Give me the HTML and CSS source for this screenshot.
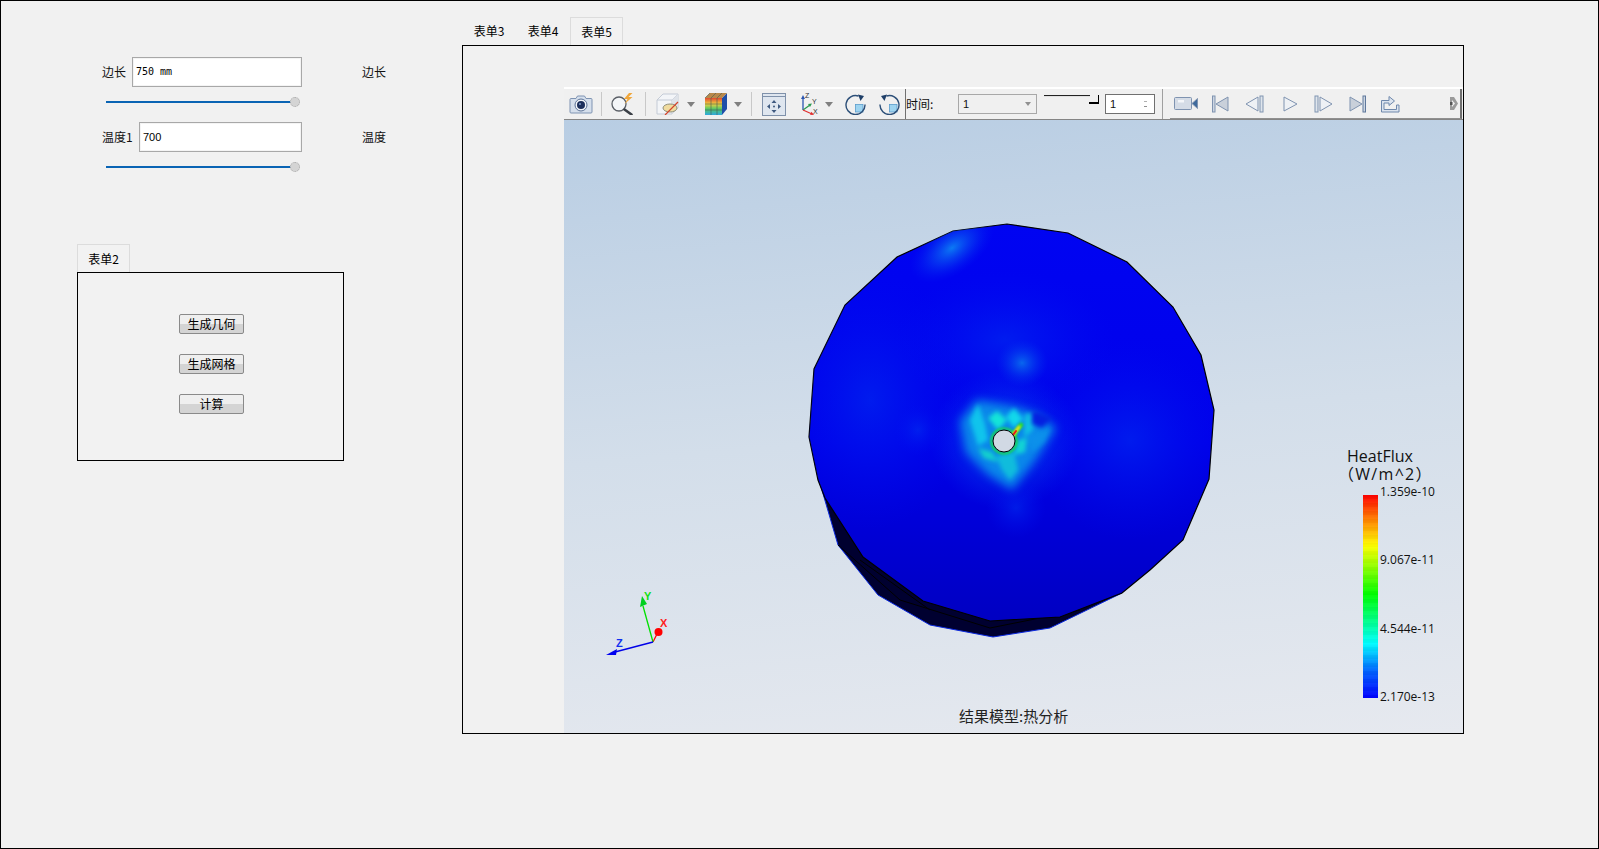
FILE: index.html
```html
<!DOCTYPE html>
<html lang="zh">
<head>
<meta charset="utf-8">
<title>热分析</title>
<link rel="stylesheet" href="styles.css">
</head>
<body>
<div class="window">
  <section class="left">
    <div class="field">
      <label class="lbl lbl-a">边长</label>
      <div class="input input-a mono">750 mm</div>
      <span class="hint">边长</span>
    </div>
    <div class="slider"><span class="track"></span><span class="thumb"></span></div>
    <div class="field field-2">
      <label class="lbl lbl-b">温度1</label>
      <div class="input input-b">700</div>
      <span class="hint">温度</span>
    </div>
    <div class="slider"><span class="track"></span><span class="thumb"></span></div>

    <div class="tabs tabs-left"><span class="tab active">表单2</span></div>
    <div class="panel-left">
      <button class="btn">生成几何</button>
      <button class="btn">生成网格</button>
      <button class="btn">计算</button>
    </div>
  </section>

  <section class="right">
    <div class="tabs"><span class="tab">表单3</span><span class="tab">表单4</span><span class="tab active">表单5</span></div>
    <div class="panel-right">
      <div class="toolbar">
        <svg class="ic ic-cam" viewBox="0 0 24 20"><path d="M2 4.500h5l1.500-2.500h7L17 4.500h5a1 1 0 0 1 1 1V18a1 1 0 0 1-1 1H2a1 1 0 0 1-1-1V5.500a1 1 0 0 1 1-1z" fill="#d5dfec" stroke="#7e93b2"/><circle cx="12" cy="11" r="6" fill="#f2f5f9" stroke="#5a7196"/><circle cx="12" cy="11" r="4" fill="#1c2f5c"/><circle cx="11" cy="10" r="1" fill="#7f9cc8"/></svg>
        <i class="sep sep-1"></i>
        <svg class="ic ic-mag" viewBox="0 0 24 22"><circle cx="8" cy="11" r="7" fill="#f4f6f8" stroke="#5a5f66" stroke-width="1.300"/><path d="M13.500 16.500l7 5" stroke="#3a3f46" stroke-width="2.600" stroke-linecap="round"/><path d="M18 0l-5 6h3.500l-3 5 8-7h-4l4-4z" fill="#f0a63a"/></svg>
        <i class="sep sep-2"></i>
        <svg class="ic ic-box" viewBox="0 0 24 22"><path d="M1 7l6-6h15v14l-6 6H1z" fill="#f3f5f8" stroke="#c4cbd6"/><path d="M1 7h15v14M16 7l6-6" fill="none" stroke="#c4cbd6"/><path d="M16 7l6-6v14l-6 6z" fill="#dfe3e9"/><ellipse cx="14" cy="15" rx="7" ry="4" fill="#f0dca0" stroke="#8f8f7a"/><path d="M9 22L22 9" stroke="#d4442c" stroke-width="1.200"/></svg>
        <i class="drop drop-1"></i>
        <svg class="ic ic-cube" viewBox="0 0 22 22"><defs><linearGradient id="cubeFace" x1="0" y1="0" x2="0" y2="1"><stop offset="0" stop-color="#e04830"/><stop offset=".35" stop-color="#f0d040"/><stop offset=".65" stop-color="#50c868"/><stop offset="1" stop-color="#30a8e0"/></linearGradient></defs><path d="M17 5l5-5v16l-5 6z" fill="#1f4fa8"/><path d="M0 5l5-5h17l-5 5z" fill="#b8884a"/><rect x="0" y="5" width="17" height="17" fill="url(#cubeFace)"/><path d="M6 5v17M12 5v17M0 11h17M0 17h17M5 0L0 5M11 0L6 5M17 0l-5 5" stroke="#4a5a50" stroke-width=".6"/></svg>
        <i class="drop drop-2"></i>
        <i class="sep sep-3"></i>
        <svg class="ic ic-fit" viewBox="0 0 24 23"><rect x=".5" y=".5" width="23" height="22" fill="#dfe6ef" stroke="#7f91aa"/><path d="M.5 3.500h23" stroke="#7f91aa"/><path d="M12 7l-2.500 3h5zM12 20l-2.500-3h5zM5 13.500l3-2.500v5zM19 13.500l-3-2.500v5z" fill="#3f5a80"/><circle cx="12" cy="13.500" r="1" fill="#3f5a80"/></svg>
        <svg class="ic ic-axes" viewBox="0 0 20 24"><path d="M4 18V6" stroke="#2a55b0" stroke-width="1.300"/><path d="M4 3L2 7h4z" fill="#2a55b0"/><path d="M4 18l7-5" stroke="#2a9a50" stroke-width="1.300"/><path d="M13 11.500l-4 .5 2 3z" fill="#2a9a50"/><path d="M4 18l9 4" stroke="#e03030" stroke-width="1.300"/><path d="M15 23l-4-.2 1.500-3z" fill="#e03030"/><text x="6" y="6" class="ax">Z</text><text x="13" y="12" class="ax">Y</text><text x="14" y="22" class="ax">X</text></svg>
        <i class="drop drop-3"></i>
        <svg class="ic ic-rot" viewBox="0 0 21 21"><rect x="10.500" y="10.500" width="7.500" height="7.500" fill="#9ed4f0" stroke="#5a9ccc" stroke-width=".8"/><path d="M13.500 2A9.500 9.500 0 1 0 20 10.500" fill="none" stroke="#2c4f78" stroke-width="1.400"/><path d="M13 .5l6 1.500-3.500 5z" fill="#1f3f68"/></svg>
        <svg class="ic ic-rot2" viewBox="0 0 21 21"><rect x="10.500" y="10.500" width="7.500" height="7.500" fill="#9ed4f0" stroke="#5a9ccc" stroke-width=".8"/><path d="M7.500 2A9.500 9.500 0 1 1 1 10.500" fill="none" stroke="#2c4f78" stroke-width="1.400"/><path d="M8 .5L2 2l3.500 5z" fill="#1f3f68"/></svg>
        <i class="vline"></i>
        <span class="time-lbl">时间:</span>
        <div class="combo"><span>1</span><i class="combo-arrow"></i></div>
        <div class="mini-slider"><i class="mini-line"></i><i class="mini-corner"></i></div>
        <div class="spin"><span>1</span><i class="spin-arrows"></i></div>
        <i class="sep sep-4"></i>
        <div class="media">
          <svg class="ic ic-rec" viewBox="0 0 24 15"><rect x=".5" y="1.500" width="17" height="12" rx="1" fill="#d5dce6" stroke="#7f93b0"/><rect x="4" y="4" width="6" height="2.500" fill="#f4f6f9"/><path d="M18 7.500l5.500-5v10z" fill="#3f6a9c" stroke="#7f93b0"/></svg>
          <svg class="ic ic-first" viewBox="0 0 17 18"><rect x=".5" y="1" width="2.500" height="16" fill="#cdd6e2" stroke="#7f93b0"/><path d="M16 2v14L4 9z" fill="#c9d0da" stroke="#7f93b0"/></svg>
          <svg class="ic ic-prev" viewBox="0 0 19 18"><path d="M13 2v14L1 9z" fill="#eef1f5" stroke="#7f93b0"/><rect x="15" y="1" width="3" height="16" fill="#dfe5ec" stroke="#7f93b0"/></svg>
          <svg class="ic ic-play" viewBox="0 0 15 18"><path d="M1 2v14l13-7z" fill="#eef1f5" stroke="#7f93b0"/></svg>
          <svg class="ic ic-next" viewBox="0 0 19 18"><rect x="1" y="1" width="3" height="16" fill="#dfe5ec" stroke="#7f93b0"/><path d="M6 2v14l12-7z" fill="#eef1f5" stroke="#7f93b0"/></svg>
          <svg class="ic ic-last" viewBox="0 0 17 18"><path d="M1 2v14l12-7z" fill="#c9d0da" stroke="#7f93b0"/><rect x="14" y="1" width="2.500" height="16" fill="#cdd6e2" stroke="#5f789c"/></svg>
          <svg class="ic ic-export" viewBox="0 0 20 19"><path d="M1.500 6.500H9V2.500l5.500 4.500L9 11.500V9H4v6.500h12.500V11H19v7H1.500z" fill="#dbe3ee" stroke="#6f88ac" stroke-linejoin="round"/></svg>
          <svg class="ic ic-grip" viewBox="0 0 8 15"><path d="M0 1h4l4 6.500-4 6.500H0z" fill="#9a9a9a"/><path d="M2 4l3 3.500-3 3.500z" fill="#f0f0f0"/><rect x="0" y="6" width="2.500" height="3" fill="#555"/></svg>
        </div>
      </div>

      <div class="view">
        <svg class="scene" viewBox="564 120 899 613" aria-hidden="true">
          <defs>
            <linearGradient id="discFill" x1="0" y1="0" x2="0" y2="1">
              <stop offset="0" stop-color="#0004f2"/>
              <stop offset=".55" stop-color="#0000ea"/>
              <stop offset="1" stop-color="#0000c2"/>
            </linearGradient>
            <radialGradient id="softBlue"><stop offset="0" stop-color="#0030f0" stop-opacity=".55"/><stop offset="1" stop-color="#0010f0" stop-opacity="0"/></radialGradient>
            <radialGradient id="topGlow"><stop offset="0" stop-color="#0c80f4" stop-opacity=".95"/><stop offset=".5" stop-color="#0850f0" stop-opacity=".5"/><stop offset="1" stop-color="#0020f0" stop-opacity="0"/></radialGradient>
            <radialGradient id="midGlow"><stop offset="0" stop-color="#0a70ee" stop-opacity=".9"/><stop offset="1" stop-color="#0030ee" stop-opacity="0"/></radialGradient>
            <clipPath id="discClip"><polygon points="953,231 1007,224 1068,233 1127,262 1173,307 1201,355 1214,410 1209,479 1183,540 1150,570 1122,593 1060,617 990,621 923,601 863,557 825,498 818,480 809,437 814,369 845,305 897,257"/></clipPath>
            <filter id="b6" x="-100%" y="-100%" width="300%" height="300%"><feGaussianBlur stdDeviation="5"/></filter>
            <filter id="b3" x="-50%" y="-50%" width="200%" height="200%"><feGaussianBlur stdDeviation="2.200"/></filter>
            <filter id="b1" x="-50%" y="-50%" width="200%" height="200%"><feGaussianBlur stdDeviation=".8"/></filter>
          </defs>

          <polygon points="819,480 838,545 878,595 930,625 993,637 1050,628 1122,593 1060,610 990,610 900,570" fill="#000030" stroke="#0a28e0" stroke-width="1"/>
          <path d="M838,545 L900,600 L990,628 L1080,610 M860,560 L930,610" fill="none" stroke="#000" stroke-width="1"/>
          <polygon points="953,231 1007,224 1068,233 1127,262 1173,307 1201,355 1214,410 1209,479 1183,540 1150,570 1122,593 1060,617 990,621 923,601 863,557 825,498 818,480 809,437 814,369 845,305 897,257" fill="url(#discFill)" stroke="#000" stroke-width="1.200"/>

          <g clip-path="url(#discClip)">
            <ellipse cx="870" cy="400" rx="100" ry="130" fill="url(#softBlue)"/>
            <ellipse cx="1130" cy="440" rx="100" ry="100" fill="url(#softBlue)"/>
            <ellipse cx="1005" cy="340" rx="110" ry="70" fill="url(#softBlue)"/>
            <ellipse cx="952" cy="248" rx="48" ry="26" transform="rotate(-35 952 248)" fill="url(#topGlow)"/>
            <ellipse cx="1022" cy="363" rx="26" ry="24" fill="url(#midGlow)"/>
            <ellipse cx="918" cy="430" rx="24" ry="26" fill="url(#softBlue)"/>
            <ellipse cx="1005" cy="440" rx="75" ry="70" fill="url(#midGlow)"/>
            <ellipse cx="1016" cy="508" rx="30" ry="30" fill="url(#softBlue)"/>
            <path d="M960,421 L977,400 L1014,407 L1037,414 L1056,428 L1032,464 L1012,490 L988,474 L966,452z" fill="#0a88ea" filter="url(#b6)"/>
            <g filter="url(#b3)">
              <path d="M970,420 L978,404 L985,424 L988,440 L978,446z" fill="#10c4ec"/>
              <polygon points="988,418 997,411 1007,420 998,430" fill="#14e4d8"/>
              <polygon points="1006,417 1014,408 1023,419 1014,428" fill="#12d8ea"/>
              <polygon points="1025,414 1035,413 1033,430 1024,438" fill="#10c0e4"/>
              <polygon points="1028,436 1050,428 1044,442 1032,452" fill="#0c90ea"/>
              <polygon points="996,456 1014,452 1018,470 1010,480 1002,470" fill="#10bcdc"/>
              <polygon points="978,448 992,452 998,462 984,458" fill="#14d0cc"/>
              <polygon points="1018,440 1027,438 1025,452 1014,455" fill="#12d4d4"/>
            </g>
            <polygon points="1032,410 1052,418 1042,428 1032,424" fill="#0420e0" filter="url(#b3)"/>
            <circle cx="1004" cy="441" r="12.500" fill="none" stroke="#18e040" stroke-width="2.200" filter="url(#b1)"/>
            <path d="M1012,437 L1017,430 L1021,425" fill="none" stroke="#28e030" stroke-width="4.500" stroke-linecap="round" filter="url(#b1)"/>
            <path d="M1012,436 L1016,431 L1019,427" fill="none" stroke="#f0e020" stroke-width="3" stroke-linecap="round" filter="url(#b1)"/>
            <path d="M1013,435 L1016,431" fill="none" stroke="#e81818" stroke-width="2" stroke-linecap="round"/>
          </g>
          <circle cx="1004" cy="441" r="11" fill="#d1d9e4" stroke="#000" stroke-width="1"/>

          <path d="M653,642 L658,632" stroke="#ff0000" stroke-width="1.300"/>
          <circle cx="658.500" cy="632" r="4" fill="#ff0000"/>
          <path d="M653,642 L643,606" stroke="#00e000" stroke-width="1.300"/>
          <path d="M642,596 L640,607 L647,604z" fill="#00d020"/>
          <path d="M653,642 L615,652" stroke="#0000e8" stroke-width="1.300"/>
          <path d="M606,655 L617,649 L616,655z" fill="#0000f0"/>
          <text x="644" y="600" class="ax-lbl ax-y">Y</text>
          <text x="660" y="627" class="ax-lbl ax-x">X</text>
          <text x="616" y="647" class="ax-lbl ax-z">Z</text>
        </svg>

        <div class="legend">
          <div class="legend-title">HeatFlux</div>
          <div class="legend-unit">（W/m^2）</div>
          <div class="legend-body">
            <div class="legend-bar"></div>
            <div class="legend-ticks"><span>1.359e-10</span><span>9.067e-11</span><span>4.544e-11</span><span>2.170e-13</span></div>
          </div>
        </div>
        <div class="caption">结果模型:热分析</div>
      </div>
    </div>
  </section>
</div>
</body>
</html>
```
FILE: styles.css
```css
* { box-sizing: border-box; }
html, body { margin: 0; padding: 0; }
body {
  width: 1599px;
  height: 849px;
  overflow: hidden;
  background: #f1f1f1;
  color: #111;
  font: 12px/16px "Noto Sans CJK SC", "Liberation Sans", sans-serif;
}
.window {
  width: 1599px;
  height: 849px;
  border: 1px solid #000;
  display: flex;
  align-items: flex-start;
}

/* left column */
.left { width: 461px; padding: 56px 0 0 76px; flex: none; }
.field { display: flex; align-items: center; height: 30px; padding-left: 25px; }
.lbl-a { width: 30px; }
.lbl-b { width: 37px; }
.input {
  height: 30px;
  border: 1px solid #a8a8a8;
  background: #fff;
  box-shadow: inset 0 0 0 1px #f4f4f4;
  padding-left: 3px;
  line-height: 28px;
  color: #000;
  font-family: "Liberation Sans", sans-serif;
  font-size: 11px;
}
.input.mono { font-family: "DejaVu Sans Mono", monospace; font-size: 10px; }
.input-a { width: 170px; }
.input-b { width: 163px; }
.hint { margin-left: 60px; }
.slider { position: relative; height: 35px; margin-left: 29px; width: 194px; }
.track { position: absolute; left: 0; right: 6px; top: 14px; height: 2px; background: #0a64b4; }
.thumb {
  position: absolute;
  right: 0;
  top: 10px;
  width: 10px;
  height: 10px;
  border-radius: 50%;
  background: #d4d4d4;
  border: 1px dotted #a8a8a8;
}

.tabs { display: flex; height: 28px; }
.tabs-left { margin-top: 57px; }
.tab { width: 54px; height: 28px; text-align: center; line-height: 28px; color: #000; }
.tab.active { width: 53px; background: #f2f2f2; border: 1px solid #dcdcdc; border-bottom: 0; }
.panel-left {
  width: 267px;
  height: 189px;
  border: 1px solid #000;
  padding-top: 41px;
  padding-left: 101px;
  display: flex;
  flex-direction: column;
  gap: 20px;
  background: #f2f2f2;
}
.btn {
  width: 65px;
  height: 20px;
  padding: 0;
  border: 1px solid #8a8a8a;
  border-radius: 2px;
  background: linear-gradient(#efefef 0, #efefef 48%, #d4d4d4 48%, #d4d4d4 100%);
  font: inherit;
  line-height: 16px;
  color: #000;
}

/* right tab widget */
.right { width: 1002px; padding-top: 16px; flex: none; }
.panel-right {
  width: 1002px;
  height: 689px;
  border: 1px solid #000;
  padding: 41px 0 0 101px;
  display: flex;
  flex-direction: column;
}

.toolbar {
  height: 33px;
  flex: none;
  display: flex;
  align-items: center;
  border-top: 2px solid #fff;
  border-bottom: 1px solid #858585;
  background: #f0f0f0;
}
.ic { display: block; flex: none; }
.ax { font: 7px "Liberation Sans", sans-serif; fill: #333; }
.sep { display: block; flex: none; width: 1px; height: 24px; background: #c8c8c8; }
.drop {
  display: block;
  flex: none;
  width: 0;
  height: 0;
  border-left: 4px solid transparent;
  border-right: 4px solid transparent;
  border-top: 5px solid #808080;
}
.ic-cam { width: 24px; height: 20px; margin-left: 5px; }
.sep-1 { margin-left: 8px; }
.ic-mag { width: 24px; height: 22px; margin-left: 9px; margin-top: -1px; }
.sep-2 { margin-left: 10px; }
.ic-box { width: 24px; height: 22px; margin-left: 10px; }
.drop-1 { margin-left: 7px; }
.ic-cube { width: 22px; height: 22px; margin-left: 10px; }
.drop-2 { margin-left: 7px; }
.sep-3 { margin-left: 9px; }
.ic-fit { width: 24px; height: 23px; margin-left: 10px; }
.ic-axes { width: 20px; height: 24px; margin-left: 13px; }
.drop-3 { margin-left: 6px; }
.ic-rot { width: 21px; height: 21px; margin-left: 12px; }
.ic-rot2 { width: 21px; height: 21px; margin-left: 13px; }
.vline { display: block; flex: none; width: 1px; height: 30px; margin-left: 5px; background: #707070; }
.time-lbl { width: 52px; flex: none; }
.combo {
  width: 79px;
  height: 20px;
  flex: none;
  border: 1px solid #a8a8a8;
  display: flex;
  align-items: center;
  justify-content: space-between;
  padding: 0 5px 0 4px;
  font: 11px "Liberation Sans", sans-serif;
  margin-top: -1px;
}
.combo-arrow { border-left: 3px solid transparent; border-right: 3px solid transparent; border-top: 4px solid #909090; }
.mini-slider {
  position: relative;
  width: 55px;
  height: 9px;
  flex: none;
  margin-left: 7px;
  margin-top: -9px;
}
.mini-line { position: absolute; left: 0; top: 0; width: 46px; height: 2px; background: linear-gradient(#222 50%, #e0e0e0 50%); }
.mini-corner { position: absolute; right: 0; top: 0; width: 10px; height: 9px; border-right: 1px solid #000; border-bottom: 2px solid #000; clip-path: polygon(0 70%, 80% 70%, 80% 0, 100% 0, 100% 100%, 0 100%); }
.spin {
  width: 50px;
  height: 20px;
  flex: none;
  margin-left: 6px;
  margin-top: -1px;
  border: 1px solid #707070;
  background: #fff;
  display: flex;
  align-items: center;
  justify-content: space-between;
  padding: 0 6px 0 4px;
  font: 11px "Liberation Sans", sans-serif;
}
.spin-arrows {
  width: 5px;
  height: 10px;
  background: linear-gradient(#b0b0b0, #b0b0b0) center 2px / 3px 1px no-repeat,
              linear-gradient(#909090, #909090) center 7px / 3px 1px no-repeat;
}
.sep-4 { margin-left: 7px; width: 1px; height: 30px; background: #a0a0a0; }
.media {
  flex: none;
  width: 292px;
  height: 30px;
  margin-left: 7px;
  display: flex;
  align-items: center;
  border-bottom: 1px solid #909090;
  border-right: 2px solid #707070;
}
.ic-rec { width: 24px; height: 15px; margin-left: 4px; }
.ic-first { width: 17px; height: 18px; margin-left: 14px; }
.ic-prev { width: 19px; height: 18px; margin-left: 16px; }
.ic-play { width: 15px; height: 18px; margin-left: 19px; }
.ic-next { width: 19px; height: 18px; margin-left: 16px; }
.ic-last { width: 17px; height: 18px; margin-left: 16px; }
.ic-export { width: 20px; height: 19px; margin-left: 14px; }
.ic-grip { width: 8px; height: 15px; margin-left: 50px; }

.view {
  position: relative;
  flex: 1;
  overflow: hidden;
  background: linear-gradient(175deg, #b8cde3 0, #d3deea 50%, #e6e9ef 100%);
}
.scene { position: absolute; left: 0; top: 0; width: 899px; height: 613px; color-interpolation-filters: sRGB; }
.ax-lbl { font: bold 11px "Liberation Sans", sans-serif; }
.ax-x { fill: #ff2020; }
.ax-y { fill: #10e010; }
.ax-z { fill: #1030f0; }

.legend {
  position: absolute;
  left: 782px;
  top: 327px;
  font-family: "Open Sans", "Noto Sans CJK SC", sans-serif;
  color: #111;
}
.legend-title { font-size: 16px; line-height: 18px; padding-left: 1px; }
.legend-unit { font-size: 16px; line-height: 18px; margin-left: -8px; letter-spacing: 1.3px; white-space: nowrap; }
.legend-body { display: flex; margin-top: 1px; margin-left: 17px; gap: 2px; }
.legend-bar {
  width: 15px;
  height: 203px;
  margin-top: 11px;
  background:
    repeating-linear-gradient(rgba(0, 0, 0, .025) 0 4px, rgba(255, 255, 255, .025) 4px 8px),
    linear-gradient(#ff0000 0, #ff8000 12%, #ffff00 25%, #00ff00 49%, #00ffff 73%, #0060ff 87%, #0000ff 100%);
}
.legend-ticks {
  height: 221px;
  display: flex;
  flex-direction: column;
  justify-content: space-between;
  font-size: 12px;
  line-height: 16px;
  white-space: nowrap;
}
.caption {
  position: absolute;
  left: 395px;
  top: 586px;
  font-size: 15px;
  line-height: 20px;
  color: #222;
  white-space: nowrap;
}
```
